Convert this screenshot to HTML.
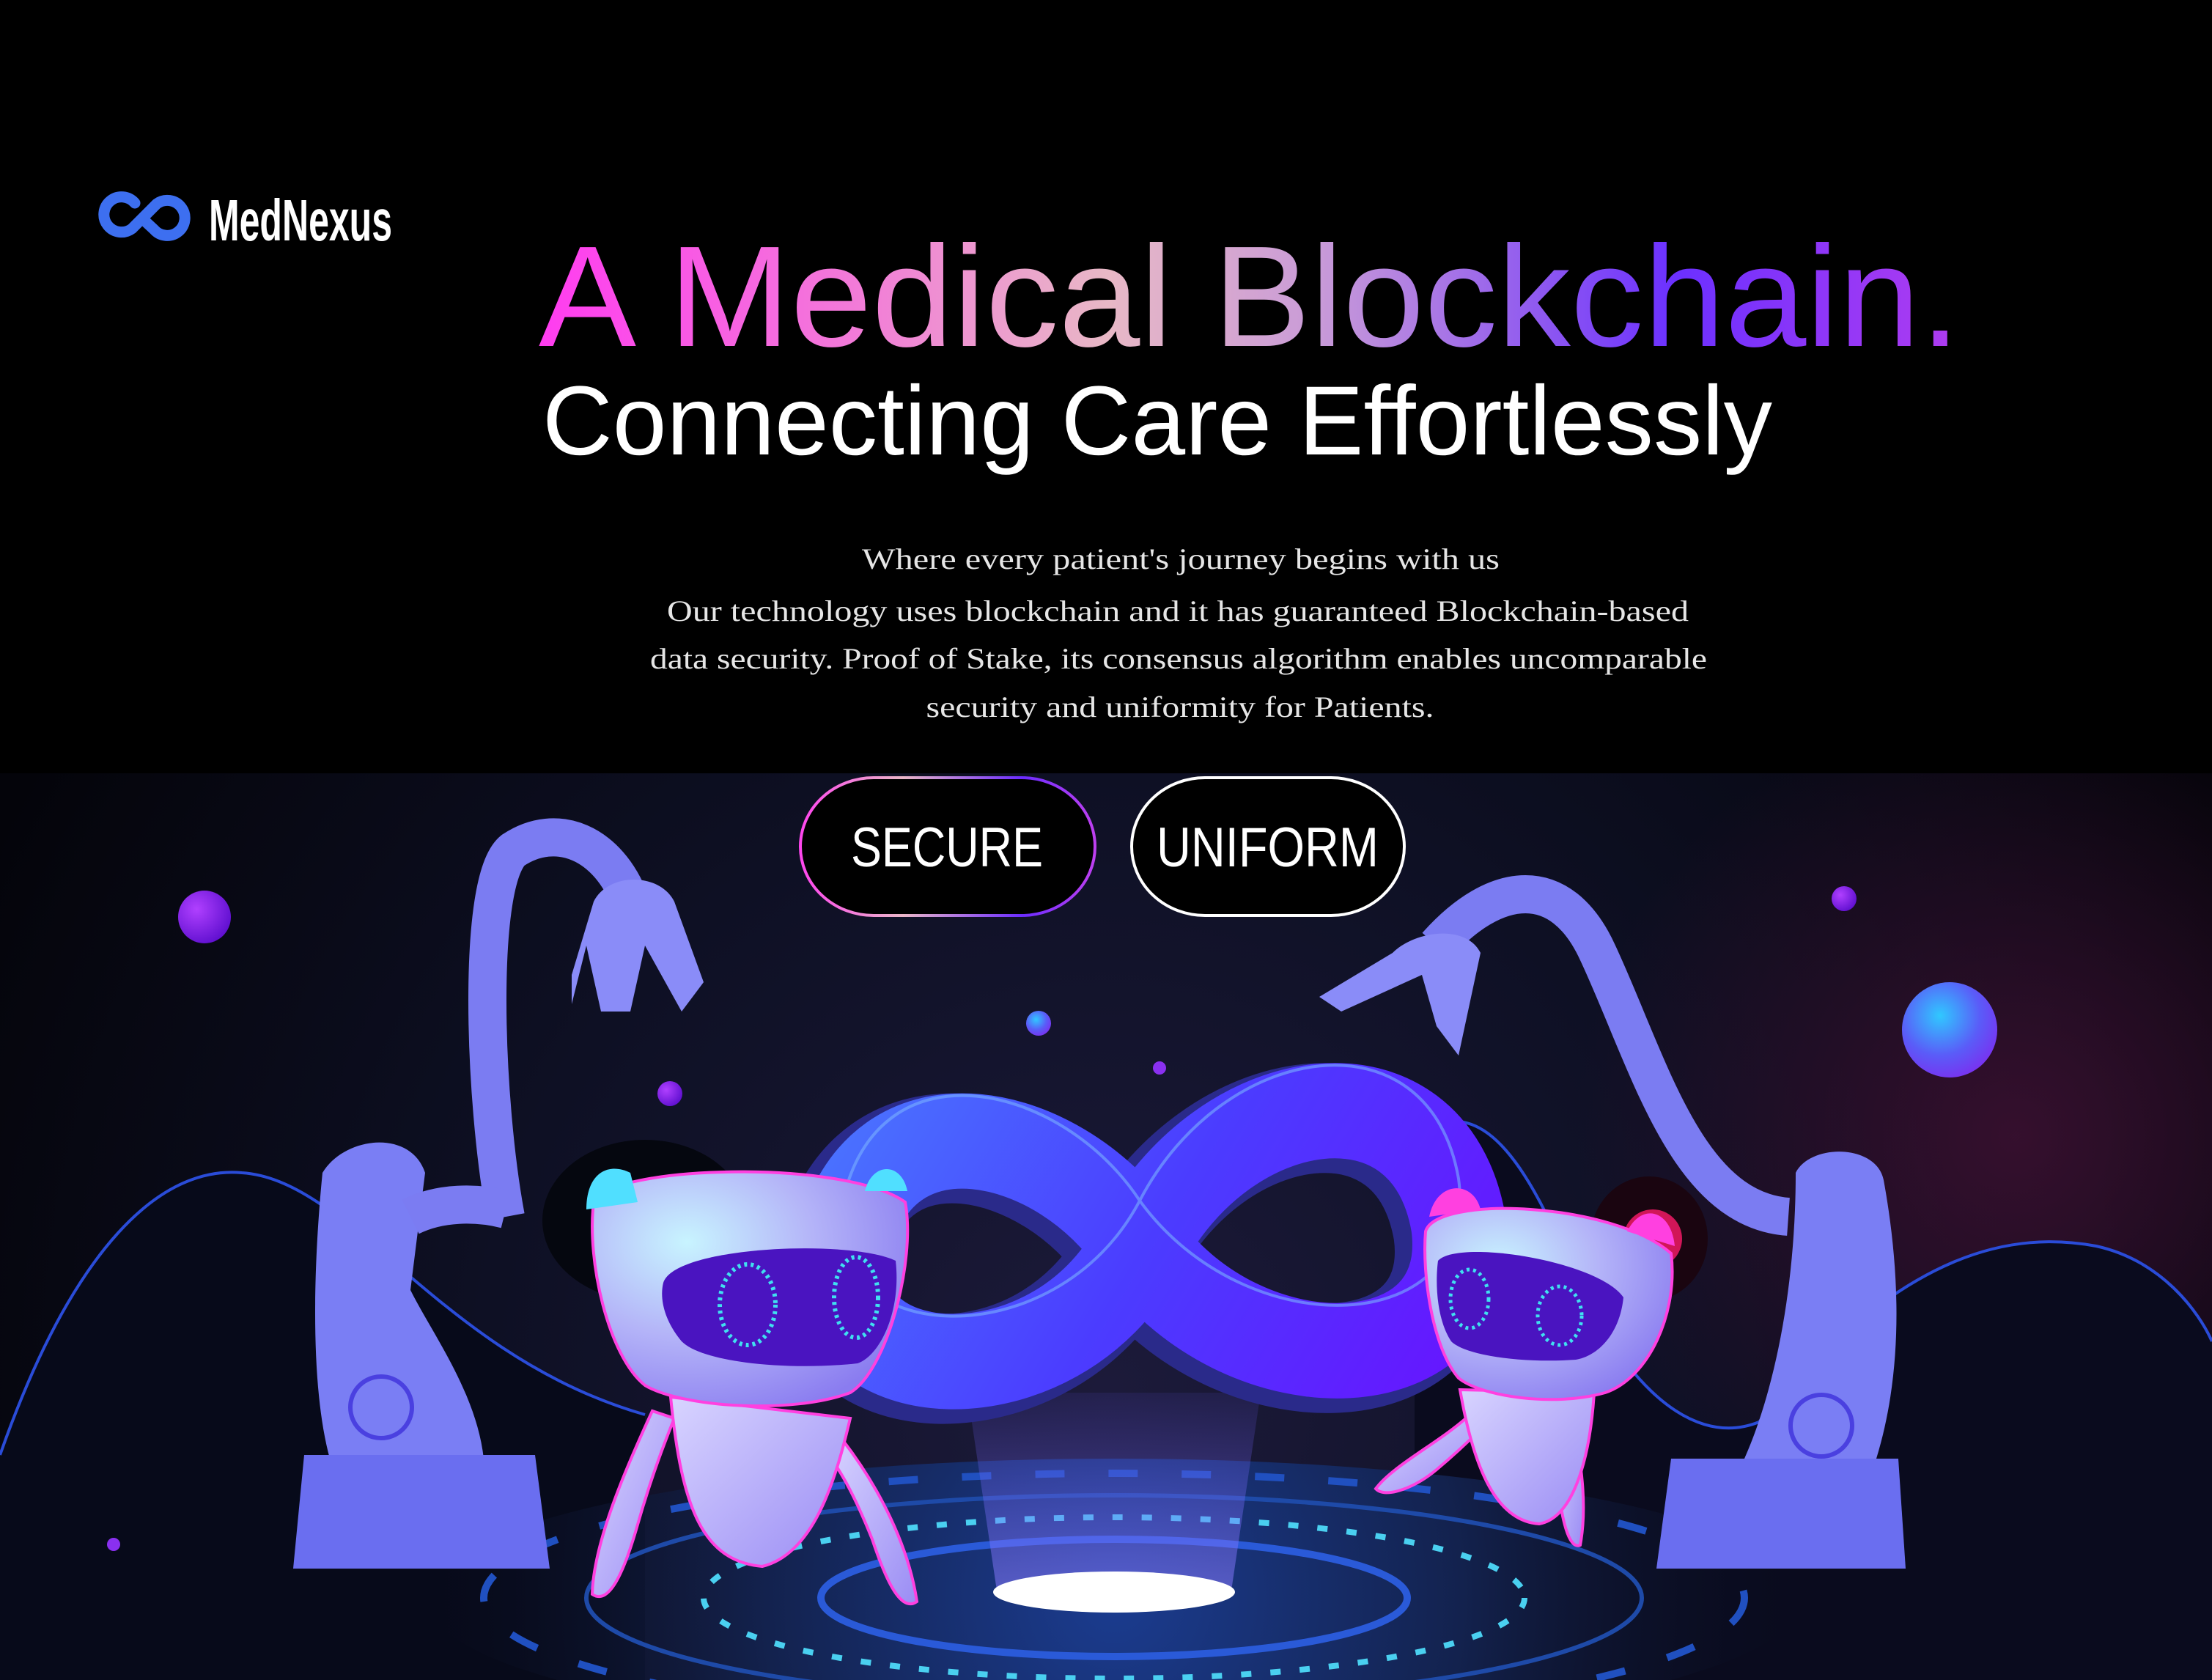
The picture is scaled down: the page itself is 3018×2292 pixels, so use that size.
<!DOCTYPE html>
<html><head><meta charset="utf-8"><style>
html,body{margin:0;padding:0;background:#000;}
svg{display:block}
</style></head><body>
<svg width="3018" height="2292" viewBox="0 0 3018 2292" xmlns="http://www.w3.org/2000/svg">
<defs>
<linearGradient id="hg" x1="735" y1="0" x2="2675" y2="0" gradientUnits="userSpaceOnUse">
<stop offset="0" stop-color="#ff3cf0"/><stop offset="0.22" stop-color="#f27ad8"/><stop offset="0.4" stop-color="#e8b8c6"/><stop offset="0.55" stop-color="#c89ad8"/><stop offset="0.8" stop-color="#6b30ff"/><stop offset="1" stop-color="#b03cf0"/></linearGradient>
<linearGradient id="bg" x1="1090" y1="0" x2="1496" y2="0" gradientUnits="userSpaceOnUse">
<stop offset="0" stop-color="#ff44ee"/><stop offset="0.35" stop-color="#eab6c8"/><stop offset="0.75" stop-color="#6b2cff"/><stop offset="1" stop-color="#c040f0"/></linearGradient>
<radialGradient id="lower" cx="1510" cy="1900" r="1700" gradientUnits="userSpaceOnUse">
<stop offset="0" stop-color="#1c1a3a"/><stop offset="0.5" stop-color="#0e1024"/><stop offset="1" stop-color="#04040a"/></radialGradient>
<radialGradient id="red" cx="2750" cy="1550" r="600" gradientUnits="userSpaceOnUse">
<stop offset="0" stop-color="#3a1030" stop-opacity="0.9"/><stop offset="1" stop-color="#3a1030" stop-opacity="0"/></radialGradient>
<linearGradient id="inf" x1="1100" y1="1450" x2="2000" y2="2000" gradientUnits="userSpaceOnUse">
<stop offset="0" stop-color="#4a7cff"/><stop offset="0.5" stop-color="#4b3cff"/><stop offset="1" stop-color="#6a10ff"/></linearGradient>
<radialGradient id="sph1" cx="0.35" cy="0.35" r="0.7"><stop offset="0" stop-color="#b040ff"/><stop offset="1" stop-color="#6010d0"/></radialGradient>
<radialGradient id="sph2" cx="0.4" cy="0.35" r="0.7"><stop offset="0" stop-color="#30c8ff"/><stop offset="0.6" stop-color="#5a5cf8"/><stop offset="1" stop-color="#7a30f0"/></radialGradient>
<radialGradient id="plat" cx="1520" cy="2180" r="950" gradientUnits="userSpaceOnUse">
<stop offset="0" stop-color="#1b3c90"/><stop offset="0.5" stop-color="#13224e"/><stop offset="1" stop-color="#0a0c1c" stop-opacity="0"/></radialGradient>
<radialGradient id="head" cx="0.3" cy="0.3" r="0.8"><stop offset="0" stop-color="#c8f4ff"/><stop offset="0.5" stop-color="#b4b4f8"/><stop offset="1" stop-color="#8a7cf0"/></radialGradient>
<linearGradient id="leg" x1="0" y1="0" x2="1" y2="1"><stop offset="0" stop-color="#d8d4ff"/><stop offset="1" stop-color="#9a8cf4"/></linearGradient>
<linearGradient id="beam" x1="0" y1="1900" x2="0" y2="2170" gradientUnits="userSpaceOnUse"><stop offset="0" stop-color="#6a5cff" stop-opacity="0.1"/><stop offset="1" stop-color="#8a7cff" stop-opacity="0.55"/></linearGradient>
</defs>
<rect width="3018" height="2292" fill="#000"/>
<rect y="1055" width="3018" height="1237" fill="url(#lower)"/>
<rect y="1055" width="3018" height="1237" fill="url(#red)"/>
<!-- hills -->
<path d="M0,1985 C100,1700 220,1590 330,1600 C480,1610 600,1850 880,1930 L880,2292 L0,2292Z" fill="#070a1a"/>
<path d="M0,1985 C100,1700 220,1590 330,1600 C480,1610 600,1850 880,1930" fill="none" stroke="#2a4cd8" stroke-width="4"/>
<path d="M1930,1550 C2000,1500 2060,1540 2130,1700 C2200,1870 2300,1980 2400,1940 C2600,1700 2750,1680 2860,1700 C2950,1720 3000,1790 3018,1830 L3018,2292 L1930,2292Z" fill="#0a0b1e"/>
<path d="M1930,1550 C2000,1500 2060,1540 2130,1700 C2200,1870 2300,1980 2400,1940 C2600,1700 2750,1680 2860,1700 C2950,1720 3000,1790 3018,1830" fill="none" stroke="#2a4cd8" stroke-width="4"/>
<!-- platform -->
<ellipse cx="1520" cy="2180" rx="940" ry="190" fill="url(#plat)"/>
<ellipse cx="1520" cy="2180" rx="720" ry="140" fill="none" stroke="#1e4aa8" stroke-width="6"/>
<ellipse cx="1520" cy="2180" rx="560" ry="110" fill="none" stroke="#4ad0f0" stroke-width="8" stroke-dasharray="14 26"/>
<ellipse cx="1520" cy="2180" rx="400" ry="80" fill="none" stroke="#2a5ad8" stroke-width="10"/>
<ellipse cx="1520" cy="2180" rx="860" ry="170" fill="none" stroke="#2050c0" stroke-width="10" stroke-dasharray="40 60"/>
<polygon points="1320,1900 1720,1900 1680,2170 1360,2170" fill="url(#beam)"/>
<ellipse cx="1520" cy="2172" rx="165" ry="28" fill="#fff"/>
<!-- spheres -->
<circle cx="279" cy="1251" r="36" fill="url(#sph1)"/>
<circle cx="2660" cy="1405" r="65" fill="url(#sph2)"/>
<circle cx="2516" cy="1226" r="17" fill="url(#sph1)"/>
<circle cx="1417" cy="1396" r="17" fill="url(#sph2)"/>
<circle cx="914" cy="1492" r="17" fill="url(#sph1)"/>
<circle cx="1582" cy="1457" r="9" fill="#8a30f0"/>
<circle cx="155" cy="2107" r="9" fill="#8a30f0"/>
<!-- infinity -->
<path d="M1555,1700 C1450,1540 1200,1480 1150,1700 C1110,1900 1440,1920 1555,1700 C1670,1480 1950,1440 1990,1670 C2020,1890 1700,1900 1555,1700 Z" fill="none" stroke="#2a2a8a" stroke-width="150" transform="translate(-14,10)"/>
<path d="M1555,1700 C1450,1540 1200,1480 1150,1700 C1110,1900 1440,1920 1555,1700 C1670,1480 1950,1440 1990,1670 C2020,1890 1700,1900 1555,1700 Z" fill="none" stroke="url(#inf)" stroke-width="130"/>
<path d="M1555,1700 C1450,1540 1200,1480 1150,1700 C1110,1900 1440,1920 1555,1700 C1670,1480 1950,1440 1990,1670 C2020,1890 1700,1900 1555,1700 Z" fill="none" stroke="#7ab0ff" stroke-width="4" opacity="0.6" transform="translate(0,-62)"/>
<!-- left arm -->
<path d="M690,1660 C660,1500 650,1200 700,1160 C760,1120 830,1150 860,1230" fill="none" stroke="#7b7cf2" stroke-width="52"/>
<path d="M810,1230 C830,1190 900,1190 920,1230 L960,1340 L930,1380 L880,1290 L860,1380 L820,1380 L800,1290 L780,1370 L780,1330Z" fill="#8a8cf8"/>
<path d="M440,1600 C470,1550 560,1540 580,1600 L560,1760 C590,1820 650,1900 660,1990 L450,1990 C420,1880 430,1700 440,1600Z" fill="#7a7ef4"/>
<circle cx="520" cy="1920" r="42" fill="none" stroke="#4a40e0" stroke-width="6"/>
<path d="M415,1985 L730,1985 L750,2140 L400,2140Z" fill="#6a6ef0"/>
<path d="M560,1660 C600,1640 650,1640 690,1650" fill="none" stroke="#7b7cf2" stroke-width="52"/>
<!-- right arm -->
<path d="M1960,1290 C2040,1200 2130,1190 2180,1300 C2250,1450 2300,1650 2440,1660" fill="none" stroke="#7b7cf2" stroke-width="52"/>
<path d="M1900,1300 C1930,1270 2000,1260 2020,1300 L1990,1440 L1960,1400 L1940,1330 L1830,1380 L1800,1360Z" fill="#8a8cf8"/>
<path d="M2450,1600 C2470,1560 2560,1560 2570,1610 C2590,1720 2600,1860 2560,1990 L2380,1990 C2420,1900 2450,1760 2450,1600Z" fill="#7a7ef4"/>
<circle cx="2485" cy="1945" r="42" fill="none" stroke="#4a40e0" stroke-width="6"/>
<path d="M2280,1990 L2590,1990 L2600,2140 L2260,2140Z" fill="#6a6ef0"/>
<!-- left robot -->
<ellipse cx="880" cy="1665" rx="140" ry="110" fill="#05070f"/>
<path d="M890,1925 C860,1990 810,2100 808,2175 C830,2190 850,2150 870,2080 C890,2010 910,1960 920,1935Z" fill="url(#leg)" stroke="#ff40e0" stroke-width="4"/>
<path d="M1150,1965 C1200,2030 1240,2110 1251,2185 C1230,2200 1210,2160 1190,2100 C1170,2050 1150,2010 1130,1985Z" fill="url(#leg)" stroke="#ff40e0" stroke-width="4"/>
<path d="M915,1906 L1160,1935 C1140,2020 1110,2120 1040,2137 C960,2130 930,2060 915,1906Z" fill="url(#leg)" stroke="#ff40e0" stroke-width="4"/>
<path d="M810,1640 C830,1590 1150,1580 1235,1640 C1250,1720 1210,1870 1160,1900 C1080,1930 930,1920 880,1890 C830,1850 800,1720 810,1640Z" fill="url(#head)" stroke="#ff40e0" stroke-width="4"/>
<path d="M800,1650 C800,1600 830,1585 860,1600 L870,1640Z" fill="#50dfff"/>
<path d="M1180,1625 C1190,1585 1230,1585 1238,1625Z" fill="#50dfff"/>
<path d="M905,1750 C920,1700 1160,1690 1222,1720 C1230,1790 1200,1850 1170,1860 C1080,1870 960,1860 930,1830 C905,1800 900,1770 905,1750Z" fill="#4a14c0"/>
<ellipse cx="1020" cy="1780" rx="38" ry="55" fill="none" stroke="#40e0f0" stroke-width="6" stroke-dasharray="4 5"/>
<ellipse cx="1168" cy="1770" rx="30" ry="55" fill="none" stroke="#40e0f0" stroke-width="6" stroke-dasharray="4 5"/>
<!-- right robot -->
<ellipse cx="2250" cy="1690" rx="80" ry="85" fill="#1a0510"/>
<circle cx="2255" cy="1690" r="40" fill="#ff1a6a" opacity="0.8"/>
<path d="M2000,1935 C1960,1970 1900,2000 1877,2031 C1890,2045 1930,2030 1960,2005 C1990,1980 2010,1960 2020,1950Z" fill="url(#leg)" stroke="#ff40e0" stroke-width="4"/>
<path d="M2140,1925 C2160,1990 2165,2060 2156,2108 C2140,2115 2130,2070 2125,2020 C2120,1980 2120,1950 2120,1930Z" fill="url(#leg)" stroke="#ff40e0" stroke-width="4"/>
<path d="M1992,1896 L2175,1900 C2170,1980 2150,2070 2100,2079 C2040,2075 2010,2000 1992,1896Z" fill="url(#leg)" stroke="#ff40e0" stroke-width="4"/>
<path d="M1945,1680 C1960,1630 2200,1640 2280,1710 C2290,1790 2250,1880 2190,1900 C2120,1920 2020,1905 1990,1880 C1955,1840 1940,1740 1945,1680Z" fill="url(#head)" stroke="#ff40e0" stroke-width="4"/>
<path d="M1950,1660 C1960,1610 2010,1610 2020,1650Z" fill="#ff40e0"/>
<path d="M2220,1680 C2240,1640 2280,1650 2285,1700Z" fill="#ff40e0"/>
<path d="M1962,1720 C1990,1690 2180,1720 2215,1770 C2210,1820 2180,1850 2150,1855 C2080,1860 2000,1850 1980,1830 C1960,1800 1958,1750 1962,1720Z" fill="#4a14c0"/>
<ellipse cx="2005" cy="1772" rx="26" ry="40" fill="none" stroke="#40e0f0" stroke-width="5" stroke-dasharray="4 5"/>
<ellipse cx="2128" cy="1795" rx="30" ry="40" fill="none" stroke="#40e0f0" stroke-width="5" stroke-dasharray="4 5"/>
<!-- text box background -->
<rect x="0" y="0" width="3018" height="1055" fill="#000"/>
<!-- logo -->
<path d="M184,277 A24,24 0 1 0 180,312 L214,278 A24,24 0 1 1 210,313 M196,300 L210,313" fill="none" stroke="#3d6ff0" stroke-width="15" stroke-linecap="round"/>
<text x="285" y="328" font-family="'Liberation Sans Narrow','Liberation Sans',sans-serif" font-weight="bold" font-size="80" fill="#fff" textLength="250" lengthAdjust="spacingAndGlyphs">MedNexus</text>
<!-- headline -->
<text x="735" y="472" font-family="'Liberation Sans',sans-serif" font-size="196" fill="url(#hg)" textLength="1940" lengthAdjust="spacingAndGlyphs">A Medical Blockchain.</text>
<text x="740" y="620" font-family="'Liberation Sans',sans-serif" font-size="134" fill="#fff" textLength="1678" lengthAdjust="spacingAndGlyphs">Connecting Care Effortlessly</text>
<g font-family="'Liberation Serif',serif" font-size="40" fill="#e6e6e6" text-anchor="middle">
<text x="1611" y="776" textLength="870" lengthAdjust="spacingAndGlyphs">Where every patient's journey begins with us</text>
<text x="1607" y="847" textLength="1394" lengthAdjust="spacingAndGlyphs">Our technology uses blockchain and it has guaranteed Blockchain-based</text>
<text x="1608" y="912" textLength="1442" lengthAdjust="spacingAndGlyphs">data security. Proof of Stake, its consensus algorithm enables uncomparable</text>
<text x="1610" y="978" textLength="693" lengthAdjust="spacingAndGlyphs">security and uniformity for Patients.</text>
</g>
<!-- buttons -->
<rect x="1092" y="1061" width="402" height="188" rx="100" ry="94" fill="#000" stroke="url(#bg)" stroke-width="4"/>
<rect x="1544" y="1061" width="372" height="188" rx="100" ry="94" fill="#000" stroke="#fff" stroke-width="4"/>
<g font-family="'Liberation Sans Narrow','Liberation Sans',sans-serif" font-size="76" fill="#fff">
<text x="1161" y="1182" textLength="262" lengthAdjust="spacingAndGlyphs">SECURE</text>
<text x="1578" y="1182" textLength="303" lengthAdjust="spacingAndGlyphs">UNIFORM</text>
</g>
</svg>
</body></html>
